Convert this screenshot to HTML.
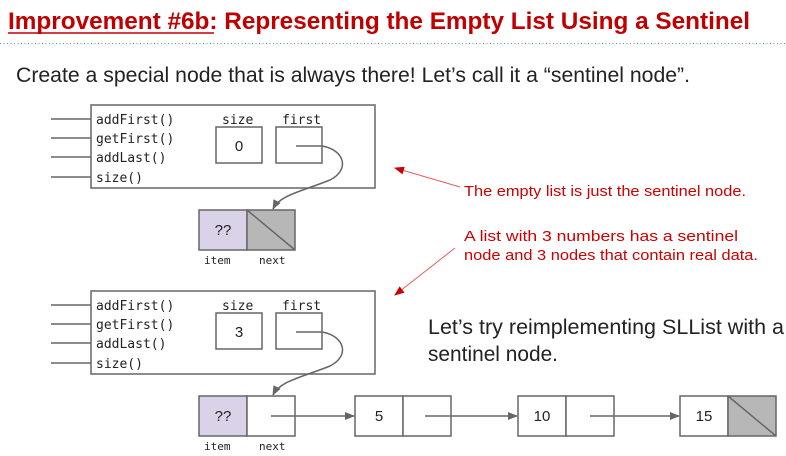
<!DOCTYPE html>
<html><head><meta charset="utf-8"><style>
body{margin:0;background:#fff;width:786px;height:456px;overflow:hidden}
svg{display:block}
</style></head><body>
<svg width="786" height="456" viewBox="0 0 786 456" xmlns="http://www.w3.org/2000/svg">
<defs>
<marker id="ag" markerWidth="10" markerHeight="8" refX="9" refY="4" orient="auto" markerUnits="userSpaceOnUse"><path d="M0,0 L10,4 L0,8z" fill="#666"/></marker>
<marker id="ar" markerWidth="10" markerHeight="8" refX="9" refY="4" orient="auto" markerUnits="userSpaceOnUse"><path d="M0,0 L10,4 L0,8z" fill="#cc0000"/></marker>
</defs>
<g font-family="Liberation Sans, sans-serif">
<text x="8" y="29" font-size="24" font-weight="bold" fill="#c00000" textLength="742" lengthAdjust="spacingAndGlyphs">Improvement #6b: Representing the Empty List Using a Sentinel</text>
<line x1="8" y1="33" x2="214" y2="33" stroke="#c00000" stroke-width="1.5"/>
<line x1="0" y1="43.5" x2="786" y2="43.5" stroke="#5a8fb0" stroke-width="1" stroke-dasharray="1,2.5"/>
<text x="16" y="82" font-size="21" fill="#222" textLength="674" lengthAdjust="spacingAndGlyphs">Create a special node that is always there! Let’s call it a “sentinel node”.</text>
<text x="428" y="334" font-size="21" fill="#222" textLength="356" lengthAdjust="spacingAndGlyphs">Let’s try reimplementing SLList with a</text>
<text x="428" y="361" font-size="21" fill="#222" textLength="130" lengthAdjust="spacingAndGlyphs">sentinel node.</text>
<g font-size="15" fill="#cc0000">
<text x="464" y="196" textLength="282" lengthAdjust="spacingAndGlyphs">The empty list is just the sentinel node.</text>
<text x="464" y="241" textLength="274" lengthAdjust="spacingAndGlyphs">A list with 3 numbers has a sentinel</text>
<text x="464" y="260" textLength="294" lengthAdjust="spacingAndGlyphs">node and 3 nodes that contain real data.</text>
</g>
<line x1="460" y1="187" x2="395" y2="168" stroke="#e06060" stroke-width="1" marker-end="url(#ar)"/>
<line x1="455" y1="248" x2="395" y2="295" stroke="#e06060" stroke-width="1" marker-end="url(#ar)"/>
</g>
<g stroke="#666" stroke-width="1.5" fill="none">
<rect x="91" y="105" width="284" height="83" fill="#fff"/>
<path d="M51 119H91M51 138H91M51 157H91M51 177H91"/>
<rect x="216" y="127" width="46" height="36"/>
<rect x="276" y="127" width="46" height="36"/>
<path d="M296 146H322C345 150 350 170 330 180C300 192 280 195 273 209" marker-end="url(#ag)"/>
<rect x="199" y="210" width="48" height="40" fill="#d9d2e9"/>
<rect x="247" y="210" width="48" height="40" fill="#b7b7b7"/>
<path d="M247 210L295 250"/>
<rect x="91" y="291" width="284" height="83" fill="#fff"/>
<path d="M51 305H91M51 324H91M51 343H91M51 363H91"/>
<rect x="216" y="313" width="46" height="36"/>
<rect x="276" y="313" width="46" height="36"/>
<path d="M296 332H322C345 336 350 356 330 366C300 378 280 381 273 395" marker-end="url(#ag)"/>
<rect x="199" y="396" width="48" height="40" fill="#d9d2e9"/>
<rect x="247" y="396" width="48" height="40" fill="#fff"/>
<rect x="355" y="396" width="48" height="40" fill="#fff"/>
<rect x="403" y="396" width="48" height="40" fill="#fff"/>
<rect x="518" y="396" width="48" height="40" fill="#fff"/>
<rect x="566" y="396" width="48" height="40" fill="#fff"/>
<rect x="680" y="396" width="48" height="40" fill="#fff"/>
<rect x="728" y="396" width="48" height="40" fill="#b7b7b7"/>
<path d="M728 396L776 436"/>
<path d="M271 416H354" marker-end="url(#ag)"/>
<path d="M425 416H517" marker-end="url(#ag)"/>
<path d="M590 416H679" marker-end="url(#ag)"/>
</g>
<g font-family="DejaVu Sans Mono, Liberation Mono, monospace" font-size="13" fill="#222">
<text x="96" y="124">addFirst()</text>
<text x="96" y="143">getFirst()</text>
<text x="96" y="162">addLast()</text>
<text x="96" y="182">size()</text>
<text x="222" y="124">size</text>
<text x="282" y="124">first</text>
<text x="96" y="310">addFirst()</text>
<text x="96" y="329">getFirst()</text>
<text x="96" y="348">addLast()</text>
<text x="96" y="368">size()</text>
<text x="222" y="310">size</text>
<text x="282" y="310">first</text>
<g font-size="11"><text x="204" y="264">item</text><text x="259" y="264">next</text>
<text x="204" y="450">item</text><text x="259" y="450">next</text></g>
</g>
<g font-family="Liberation Sans, sans-serif" font-size="15" fill="#222" text-anchor="middle">
<text x="239" y="151">0</text>
<text x="239" y="337">3</text>
<text x="223" y="235">??</text>
<text x="223" y="421">??</text>
<text x="379" y="421">5</text>
<text x="542" y="421">10</text>
<text x="704" y="421">15</text>
</g>
</svg>
</body></html>
